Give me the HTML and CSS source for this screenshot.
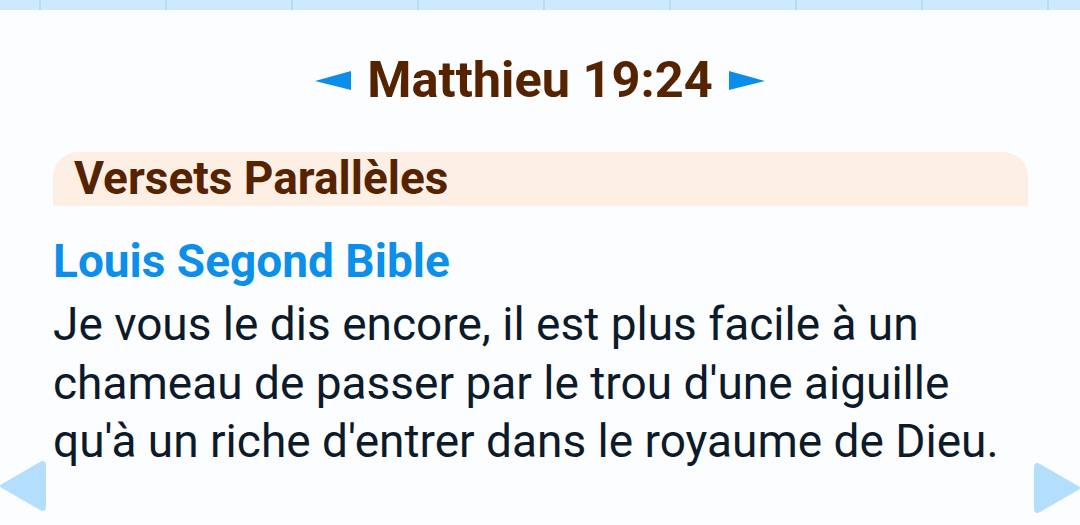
FILE: index.html
```html
<!DOCTYPE html>
<html lang="fr">
<head>
    <meta charset="UTF-8">
    <meta name="viewport" content="width=device-width, initial-scale=1.0">
    <title>Matthieu 19:24</title>
    <link rel="stylesheet" href="styles.css">
</head>
<body>
    <!-- Tab strip (scrolled off the top) -->
    <div class="tab-strip">
        <span></span><span></span><span></span><span></span><span></span>
        <span></span><span></span><span></span><span></span>
    </div>

    <!-- Verse reference -->
    <div class="verse-nav">
        <svg class="arrow" width="36" height="20" viewBox="0 0 36 20"><polygon points="0,10 36,0 36,19"/></svg>
        <h1>Matthieu 19:24</h1>
        <svg class="arrow" width="36" height="20" viewBox="0 0 36 20"><polygon points="36,10 0,0 0,19"/></svg>
    </div>

    <!-- Parallel verses -->
    <div class="section">
        <div class="section-head">Versets Parallèles</div>
        <div class="version">Louis Segond Bible</div>
        <p class="verse-text">Je vous le dis encore, il est plus facile à un chameau de passer par le trou d'une aiguille qu'à un riche d'entrer dans le royaume de Dieu.</p>
    </div>

    <!-- Page arrows -->
    <svg class="page-arrow prev" width="48" height="54" viewBox="0 0 48 54"><path d="M2 25.5 L41 3 Q47 0 47 7 L47 47 Q47 54 41 51 L2 28.5 Q0 27 2 25.5 Z"/></svg>
    <svg class="page-arrow next" width="48" height="54" viewBox="0 0 48 54"><path d="M46 25.5 L7 3 Q1 0 1 7 L1 47 Q1 54 7 51 L46 28.5 Q48 27 46 25.5 Z"/></svg>
</body>
</html>
```

FILE: styles.css
```css
body {
    margin: 0;
    font-family: Roboto, "Liberation Sans", sans-serif;
    background-color: #fbfdfe;
    color: #0c1a2a;
    height: 525px;
    overflow: hidden;
    position: relative;
}
/* Tab strip */
.tab-strip {
    height: 10px;
    background-color: #cce9fe;
    display: flex;
    padding-left: 39px;
    gap: 124px;
}
.tab-strip span {
    width: 2px;
    background-color: #b6dcf8;
}
/* Verse reference */
.verse-nav {
    display: flex;
    justify-content: center;
    align-items: center;
    gap: 16px;
    margin-top: 40px;
}
.verse-nav h1 {
    margin: 0;
    font-size: 50.5px;
    line-height: 60px;
    font-weight: 700;
    color: #552300;
}
.arrow {
    fill: #0a8eea;
    margin-top: 2px;
}
/* Parallel verses */
.section {
    margin: 42px 52px 0 53px;
}
.section-head {
    height: 54px;
    line-height: 52px;
    padding-left: 21px;
    border-radius: 25px 25px 0 0;
    background-color: #feefe4;
    color: #552300;
    font-size: 46px;
    font-weight: 700;
}
.version {
    margin-top: 26px;
    font-size: 46px;
    line-height: 58px;
    font-weight: 700;
    color: #0b8fea;
}
.verse-text {
    margin: 5px 0 0;
    font-size: 46px;
    line-height: 58.5px;
}
/* Page arrows */
.page-arrow {
    position: absolute;
    fill: #b4defd;
}
.page-arrow.prev {
    left: -1px;
    top: 459px;
}
.page-arrow.next {
    right: -1px;
    top: 461px;
}
```
